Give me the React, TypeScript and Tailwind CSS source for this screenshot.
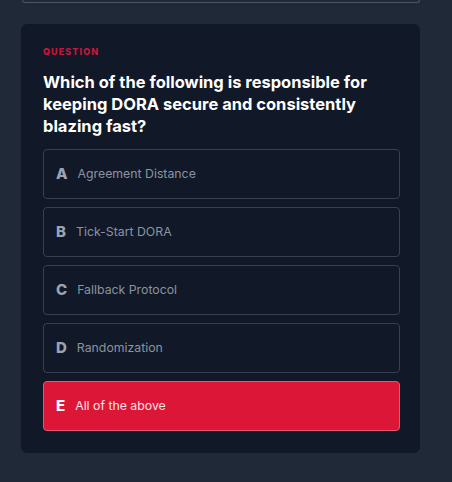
import React from "react";

const options = [
  { letter: "A", text: "Agreement Distance" },
  { letter: "B", text: "Tick-Start DORA" },
  { letter: "C", text: "Fallback Protocol" },
  { letter: "D", text: "Randomization" },
  { letter: "E", text: "All of the above", selected: true },
];

export default function App() {
  return (
    <div
      className="w-[452px] h-[482px] bg-[#1f2937] overflow-hidden"
      style={{ fontFamily: "Inter, 'Noto Sans', sans-serif" }}
    >
      <div className="ml-[22px] w-[398px] h-[3px] border-x border-b border-[#4b5563] rounded-b-md" />
      <div className="ml-[21px] mt-[21px] w-[399px] bg-[#111827] rounded-md pl-[22px] pr-[20px] pt-[22px] pb-[22px]">
        <div className="text-[9px] font-extrabold tracking-[0.12em] text-[#c8173a] leading-[12px]">
          QUESTION
        </div>
        <h2 className="mt-[13px] text-[16.5px] font-bold leading-[22px] text-white">
          Which of the following is responsible for keeping DORA secure and consistently blazing fast?
        </h2>
        <div className="mt-[12px] flex flex-col gap-[8px]">
          {options.map((o) => (
            <div
              key={o.letter}
              className={
                o.selected
                  ? "h-[50px] flex items-center gap-[10px] px-3 rounded-[4px] border border-[#e5566f] bg-[#dc1637]"
                  : "h-[50px] flex items-center gap-[10px] px-3 rounded-[4px] border border-[#374151] bg-[#111827]"
              }
            >
              <span
                className={
                  o.selected
                    ? "text-[15px] font-extrabold text-white"
                    : "text-[15px] font-extrabold text-[#9ca3af]"
                }
              >
                {o.letter}
              </span>
              <span
                className={
                  o.selected
                    ? "text-[12.3px] text-[#fde4e8]"
                    : "text-[12.3px] text-[#8b93a0]"
                }
              >
                {o.text}
              </span>
            </div>
          ))}
        </div>
      </div>
    </div>
  );
}
